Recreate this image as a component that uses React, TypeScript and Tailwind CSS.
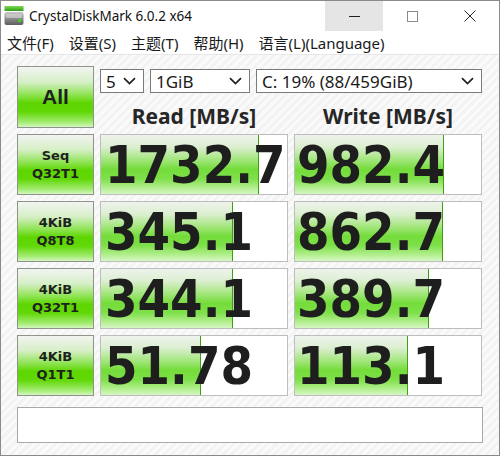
import React from 'react';

const ROWS = [
  { l1: 'Seq', l2: 'Q32T1', read: '1732.7', readW: 158, write: '982.4', writeW: 149 },
  { l1: '4KiB', l2: 'Q8T8', read: '345.1', readW: 132, write: '862.7', writeW: 148 },
  { l1: '4KiB', l2: 'Q32T1', read: '344.1', readW: 132, write: '389.7', writeW: 134 },
  { l1: '4KiB', l2: 'Q1T1', read: '51.78', readW: 100, write: '113.1', writeW: 113 },
];

const MENU = ['文件(F)', '设置(S)', '主题(T)', '帮助(H)', '语言(L)(Language)'];

const uiFont = "font-['Noto_Sans','Noto_Sans_CJK_SC',sans-serif]";

function AppIcon() {
  return (
    <svg width="20" height="20" viewBox="0 0 20 20">
      <defs>
        <linearGradient id="gbar" x1="0" y1="0" x2="0" y2="1">
          <stop offset="0" stopColor="#7fdc55" />
          <stop offset="1" stopColor="#2f9e12" />
        </linearGradient>
        <linearGradient id="gbody" x1="0" y1="0" x2="0" y2="1">
          <stop offset="0" stopColor="#c9c9c9" />
          <stop offset="0.5" stopColor="#8d8d8d" />
          <stop offset="1" stopColor="#5e5e5e" />
        </linearGradient>
      </defs>
      <rect x="0.5" y="0" width="19" height="5" fill="url(#gbar)" />
      <rect x="0.5" y="6" width="19" height="13" rx="2" fill="url(#gbody)" />
      <rect x="2" y="8" width="16" height="4" rx="1" fill="#d8d8d8" opacity="0.6" />
      <rect x="14" y="13" width="3" height="3" fill="#47d11a" />
    </svg>
  );
}

function Chevron() {
  return (
    <svg width="13" height="8" viewBox="0 0 13 8" className="shrink-0">
      <path d="M1 1.2 L6.5 6.5 L12 1.2" fill="none" stroke="#1e1e1e" strokeWidth="1.7" />
    </svg>
  );
}

function Select({ value, className }: { value: string; className: string }) {
  return (
    <div
      className={`h-[24px] bg-white border border-[#7a7a7a] flex items-center justify-between pl-[5px] pr-[7px] text-[17px] text-[#1a1a1a] leading-none ${uiFont} ${className}`}
    >
      <span>{value}</span>
      <Chevron />
    </div>
  );
}

function GreenButton({ children, className = '' }: { children: React.ReactNode; className?: string }) {
  return (
    <div
      className={`border border-[#8e938c] bg-[linear-gradient(180deg,#f2f4f1_0%,#d6efc7_25%,#8ce34f_47%,#5dd600_60%,#62d808_75%,#a3ec72_92%,#d4f6bf_100%)] flex flex-col items-center justify-center text-[#1f1f1f] font-bold ${className}`}
    >
      {children}
    </div>
  );
}

function Cell({ value, width, textPad }: { value: string; width: number; textPad: string }) {
  return (
    <div className="relative h-[61px] bg-white border border-[#bdbdbd] overflow-hidden flex items-center">
      <div
        className="absolute left-0 top-0 bottom-0 border-r border-[#3f9f14] bg-[linear-gradient(180deg,#eef3ec_0%,#dcefd1_20%,#a3e67c_42%,#74dc3a_58%,#7ee04a_74%,#b4ee90_90%,#d6f7c5_100%)]"
        style={{ width }}
      />
      <span
        className={`relative whitespace-nowrap text-[52px] leading-none font-bold text-[#1e1e1e] font-['DejaVu_Sans_Condensed','DejaVu_Sans',sans-serif] ${textPad}`}
      >
        {value}
      </span>
    </div>
  );
}

export default function App() {
  return (
    <div className="w-[500px] h-[456px] bg-white border border-[#8a8a8a] flex flex-col overflow-hidden">
      {/* title bar */}
      <div className="h-[30px] shrink-0 flex items-stretch bg-white">
        <div className="flex items-center pl-[3px] gap-[5px]">
          <AppIcon />
          <span className={`text-[13.5px] text-[#111] ${uiFont}`}>CrystalDiskMark 6.0.2 x64</span>
        </div>
        <div className="ml-auto flex">
          <div className="w-[58px] bg-[#e5e5e5] flex items-center justify-center">
            <div className="w-[11px] h-px bg-[#222]" />
          </div>
          <div className="w-[58px] flex items-center justify-center">
            <div className="w-[11px] h-[11px] border border-[#8a8a8a]" />
          </div>
          <div className="w-[58px] flex items-center justify-center">
            <svg width="12" height="12" viewBox="0 0 12 12">
              <path d="M0.5 0.5 L11.5 11.5 M11.5 0.5 L0.5 11.5" stroke="#222" strokeWidth="1" />
            </svg>
          </div>
        </div>
      </div>

      {/* menu bar */}
      <div className={`h-[24px] shrink-0 flex items-center pt-[2px] bg-white border-b border-[#e6e6e6] text-[15px] text-[#1a1a1a] ${uiFont}`}>
        {MENU.map(m => (
          <span key={m} className="px-[7.5px] first:pl-[6px]">
            {m}
          </span>
        ))}
      </div>

      {/* content */}
      <div className="flex-1 bg-[repeating-linear-gradient(135deg,#f3f3f3_0px,#f3f3f3_3px,#fafafa_3px,#fafafa_6px)] pt-[11px] pl-[16px]">
        <div className="grid grid-cols-[77px_188px_188px] gap-x-[6px] gap-y-[6px]">
          <GreenButton className="h-[62px] text-[21px] font-['Liberation_Sans',sans-serif]">All</GreenButton>
          <div className="col-span-2 flex flex-col">
            <div className="flex gap-[6px] mt-[3px]">
              <Select value="5" className="w-[44px]" />
              <Select value="1GiB" className="w-[100px]" />
              <Select value="C: 19% (88/459GiB)" className="w-[226px]" />
            </div>
            <div className="grid grid-cols-2 gap-x-[6px] mt-[13px] text-[21px] leading-none font-bold text-[#262626] font-['Noto_Sans',sans-serif]">
              <div className="text-center">Read [MB/s]</div>
              <div className="text-center">Write [MB/s]</div>
            </div>
          </div>

          {ROWS.map((r, i) => (
            <React.Fragment key={i}>
              <GreenButton className="h-[61px] text-[13px] leading-[18px] font-['DejaVu_Sans',sans-serif]">
                <span>{r.l1}</span>
                <span>{r.l2}</span>
              </GreenButton>
              <Cell value={r.read} width={r.readW} textPad="pl-[4px]" />
              <Cell value={r.write} width={r.writeW} textPad="pl-[2px]" />
            </React.Fragment>
          ))}
        </div>
        <div className="mt-[11px] w-[466px] h-[36px] bg-white border border-[#a9a9a9]" />
      </div>
    </div>
  );
}
